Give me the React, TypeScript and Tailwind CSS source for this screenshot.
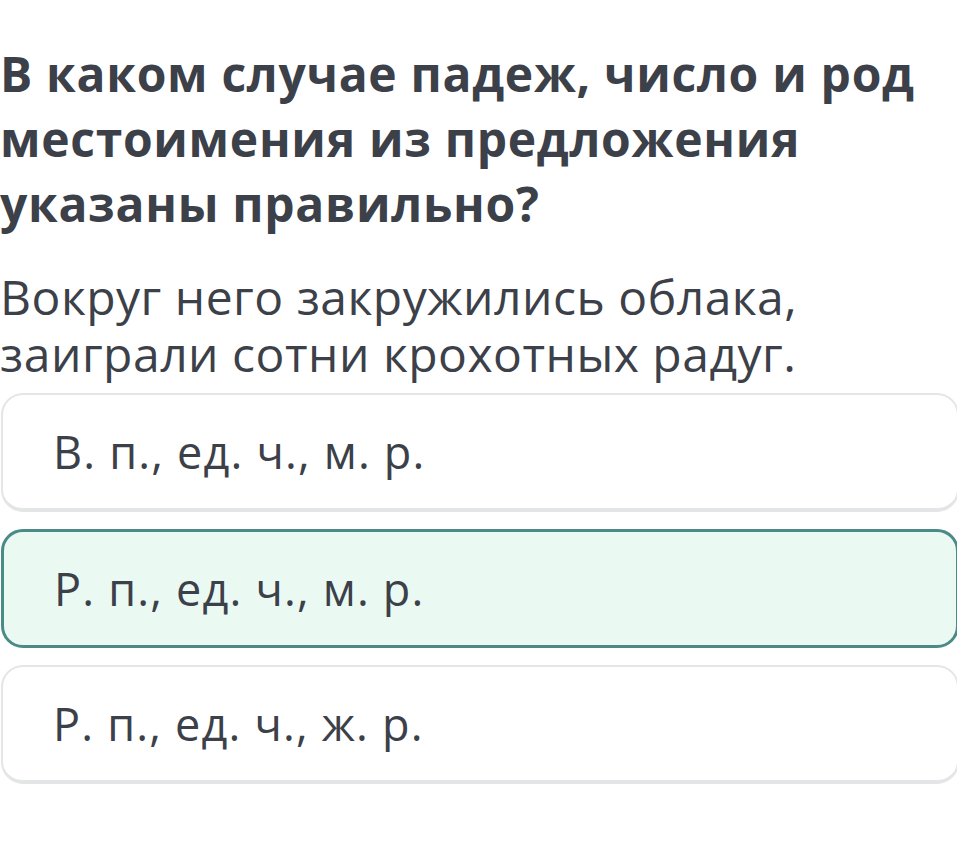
const OPTIONS = [
    { id: 'a', label: 'В. п., ед. ч., м. р.', selected: false },
    { id: 'b', label: 'Р. п., ед. ч., м. р.', selected: true },
    { id: 'c', label: 'Р. п., ед. ч., ж. р.', selected: false },
]

export default function App() {
    return (
        <div className="w-[957px] h-[858px] overflow-hidden bg-white text-[#3c4049] font-['Open_Sans',sans-serif]">
            <div className="pt-[41px]">
                <h1 className="text-[48px] leading-[65px] font-bold tracking-[0.7px]">
                    В каком случае падеж, число и род местоимения из предложения указаны правильно?
                </h1>
                <p className="mt-[32px] text-[48px] leading-[57px] font-normal tracking-[0.5px]">
                    Вокруг него закружились облака, заиграли сотни крохотных радуг.
                </p>
            </div>

            <div className="mt-[11px] ml-[1px] w-[958px] flex flex-col gap-[17px]">
                {OPTIONS.map(opt => (
                    <div
                        key={opt.id}
                        className={`h-[119px] rounded-[22px] flex items-center pl-[50px] ${opt.selected
                            ? 'border-[3px] border-[#4b8a86] bg-[#ebf9f3]'
                            : 'border-2 border-b-4 border-[#e4e5e6] bg-white'
                            }`}
                    >
                        <span className="text-[45px] leading-none tracking-[1.2px]">{opt.label}</span>
                    </div>
                ))}
            </div>
        </div>
    )
}
